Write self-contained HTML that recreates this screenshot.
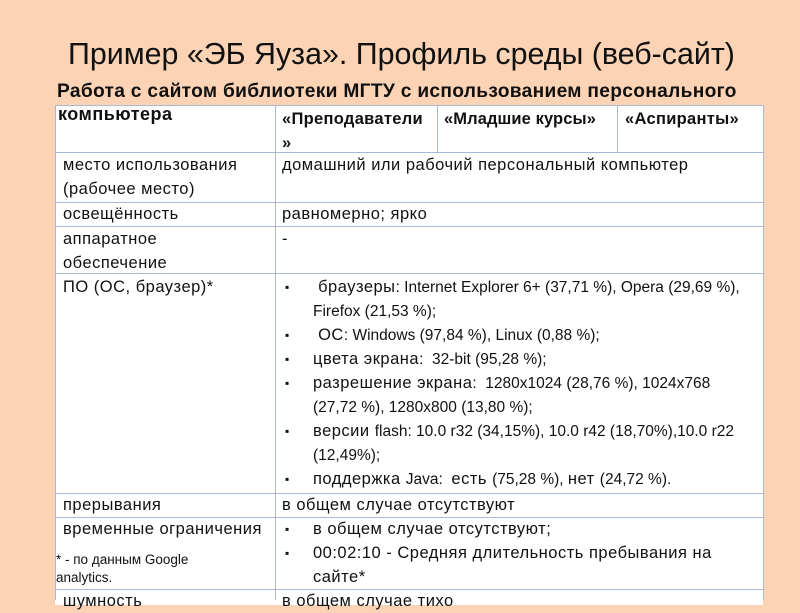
<!DOCTYPE html>
<html><head><meta charset="utf-8"><style>
body{margin:0;width:800px;height:600px;overflow:hidden;background:#fcd3b4;font-family:"Liberation Sans","DejaVu Sans",sans-serif;position:relative;color:#111}
.a{position:absolute;white-space:nowrap}
.t{font-size:16.5px;line-height:24px;letter-spacing:0.5px}
.t div{height:24px;line-height:24px;overflow:visible}
.l{font-family:"Liberation Sans",sans-serif;font-size:15.5px;letter-spacing:0;line-height:10px}
.h{position:absolute;height:1px;background:#a9b8d6}
.v{position:absolute;width:1px;background:#a9b8d6}
.b{position:absolute;font-size:12px;line-height:24px}
</style></head><body>
<div class="a" style="left:68px;top:34px;font-size:30.4px;line-height:40px">Пример «ЭБ Яуза». Профиль среды (веб-сайт)</div>
<div class="a" style="left:57px;top:80px;font-size:19.2px;font-weight:bold;line-height:24px;letter-spacing:0.3px">Работа с сайтом библиотеки МГТУ с использованием персонального</div>
<div style="position:absolute;left:55px;top:105px;width:708px;height:500px;background:#fff"></div>
<div class="h" style="left:55px;top:105px;width:709px"></div>
<div class="h" style="left:55px;top:152px;width:709px"></div>
<div class="h" style="left:55px;top:202px;width:709px"></div>
<div class="h" style="left:55px;top:226px;width:709px"></div>
<div class="h" style="left:55px;top:273px;width:709px"></div>
<div class="h" style="left:55px;top:493px;width:709px"></div>
<div class="h" style="left:55px;top:517px;width:709px"></div>
<div class="h" style="left:55px;top:589px;width:709px"></div>
<div class="v" style="left:55px;top:105px;height:495px"></div>
<div class="v" style="left:275px;top:105px;height:495px"></div>
<div class="v" style="left:763px;top:105px;height:495px"></div>
<div class="v" style="left:437px;top:105px;height:47px"></div>
<div class="v" style="left:617px;top:105px;height:47px"></div>
<div class="a" style="left:58px;top:103px;font-size:18px;font-weight:bold;line-height:22px;letter-spacing:0.5px">компьютера</div>
<div class="a t" style="left:282px;top:107px;font-weight:bold;letter-spacing:0.3px">«Преподаватели</div>
<div class="a t" style="left:282px;top:131px;font-weight:bold">»</div>
<div class="a t" style="left:444px;top:107px;font-weight:bold;letter-spacing:0.1px">«Младшие курсы»</div>
<div class="a t" style="left:625px;top:107px;font-weight:bold;letter-spacing:0.3px">«Аспиранты»</div>
<div class="a t" style="left:63px;top:153px">место использования<br>(рабочее место)</div>
<div class="a t" style="left:282px;top:153px">домашний или рабочий персональный компьютер</div>
<div class="a t" style="left:63px;top:202px">освещённость</div>
<div class="a t" style="left:282px;top:202px">равномерно; ярко</div>
<div class="a t" style="left:63px;top:227px">аппаратное<br>обеспечение</div>
<div class="a t" style="left:282px;top:227px">-</div>
<div class="a t" style="left:63px;top:275px">ПО (ОС, браузер)*</div>
<div class="a t" style="left:313px;top:275px">
<div>&nbsp;браузеры<span class="l">: Internet Explorer 6+ (37,71 %), Opera (29,69 %),</span></div>
<div><span class="l">Firefox (21,53 %);</span></div>
<div>&nbsp;ОС<span class="l">: Windows (97,84 %), Linux (0,88 %);</span></div>
<div>цвета экрана<span class="l">:&nbsp; 32-bit (95,28 %);</span></div>
<div>разрешение экрана<span class="l">:&nbsp; 1280x1024 (28,76 %), 1024x768</span></div>
<div><span class="l">(27,72 %), 1280x800 (13,80 %);</span></div>
<div>версии <span class="l">flash: 10.0 r32 (34,15%), 10.0 r42 (18,70%),10.0 r22</span></div>
<div><span class="l">(12,49%);</span></div>
<div>поддержка <span class="l">Java:&nbsp; </span>есть <span class="l">(75,28 %), </span>нет <span class="l">(24,72 %).</span></div>
</div>
<div class="b" style="left:285px;top:275px">▪<br><br>▪<br>▪<br>▪<br><br>▪<br><br>▪</div>
<div class="a t" style="left:63px;top:493px">прерывания</div>
<div class="a t" style="left:282px;top:493px">в общем случае отсутствуют</div>
<div class="a t" style="left:63px;top:517px">временные ограничения</div>
<div class="a" style="left:56px;top:551px;font-size:13.5px;line-height:18px">* - по данным Google<br>analytics.</div>
<div class="a t" style="left:313px;top:517px">в общем случае отсутствуют;<br>00:02:10 - Средняя длительность пребывания на<br>сайте*</div>
<div class="b" style="left:285px;top:517px">▪<br>▪</div>
<div class="a t" style="left:63px;top:589px">шумность</div>
<div class="a t" style="left:282px;top:589px">в общем случае тихо</div>
</body></html>
